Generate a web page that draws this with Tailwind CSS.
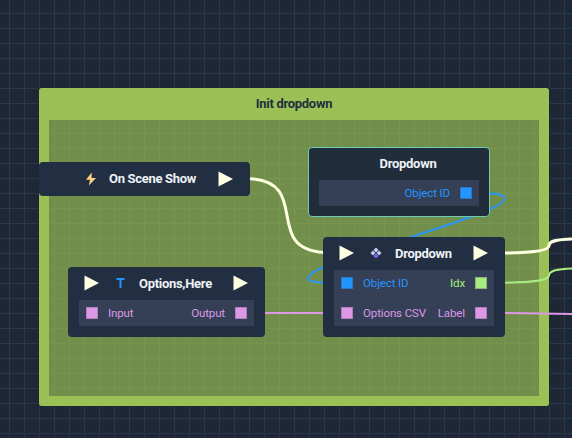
<!DOCTYPE html>
<html lang="en">
<head>
<meta charset="utf-8">
<title>Node graph</title>
<script src="https://cdn.jsdelivr.net/npm/@tailwindcss/browser@4"></script>
</head>
<body class="overflow-hidden bg-[#1e2735]">
<svg class="hidden">
  <symbol id="flow" viewBox="0 0 15 16"><path d="M.5.5 15 8 .5 15.5Z" fill="#ffffe1"/></symbol>
</svg>
<main class="relative h-[438px] w-[572px] overflow-hidden bg-[#1e2735] bg-[linear-gradient(to_right,#2c3847_1px,transparent_1px),linear-gradient(to_bottom,#2c3847_1px,transparent_1px)] bg-[size:15px_15px] bg-[position:9px_13px] font-['Roboto',sans-serif] text-[11.5px] leading-[16px] tracking-[-0.12px]">
  <!-- group -->
  <section class="absolute left-[39px] top-[88px] flex h-[318px] w-[510px] flex-col rounded-[2px] border-x-10 border-b-10 border-[#9bc056] outline outline-[#1e2735]">
    <h2 class="h-8 bg-[#9bc056] pt-2 text-center text-[13px] font-bold tracking-[-0.3px] text-[#222f3e]">Init dropdown</h2>
    <div class="flex-1 bg-[#9bc056]/68"></div>
  </section>

  <!-- links -->
  <svg class="absolute inset-0" width="572" height="438" fill="none">
    <path d="M250 178.700C312 182 262 249 324 252.400" stroke="#ffffe1" stroke-width="3"/>
    <path d="M505 253C535 252.500 548 250.500 549 246C549 241 556 239.500 572 239" stroke="#ffffe1" stroke-width="3"/>
    <path d="M505 282.700C535 282.300 548 280.500 549 275.500C549 271 556 269 572 268.500" stroke="#a8ec81" stroke-width="2"/>
    <path d="M265 313H324M505 313C540 313 540 314 572 314" stroke="#dc98e5" stroke-width="2"/>
    <path d="M489 193.500C507 193.500 512 200 490 209C469 218.500 439 228 411 237C374 248 342 258 323 267C301 278 305 282 324 282.500" stroke="#2b96f5" stroke-width="2"/>
  </svg>

  <!-- event node -->
  <article class="absolute left-[39px] top-[162px] flex h-[34px] w-[211px] items-center rounded-[4px] bg-[#222f42]">
    <svg class="ml-[46px] h-[14px] w-[12px]" viewBox="0 0 12 14"><path d="M6.700.5 1 7.800H5L3.900 13.500 11 6H6.600Z" fill="#ffcf7d"/></svg>
    <h3 class="ml-3 w-[97px] text-[13px] font-bold tracking-[-0.3px] text-[#eef1f5]">On Scene Show</h3>
    <svg class="ml-[12px] h-4 w-[15px]"><use href="#flow"/></svg>
  </article>

  <!-- text node -->
  <article class="absolute left-[68px] top-[267px] h-[70px] w-[197px] rounded-[4px] bg-[#222f42] px-[11px]">
    <header class="mb-px flex h-8 items-center pl-[5px]">
      <svg class="h-4 w-[15px]"><use href="#flow"/></svg>
      <svg class="ml-[17px] h-[10px] w-[9px]" viewBox="0 0 9 10"><path d="M.5 1H8.500M4.500 1V10" stroke="#2395ff" stroke-width="2"/></svg>
      <h3 class="ml-[14px] w-[94px] pt-px text-[13px] font-bold tracking-[-0.3px] text-[#eef1f5]">Options,Here</h3>
      <svg class="h-4 w-[15px] shrink-0"><use href="#flow"/></svg>
    </header>
    <div class="flex h-[26px] items-center bg-[#354056] px-[7px] text-[#dc98e5]">
      <i class="size-3 border border-[#ac80b8] bg-[#dc98e5]"></i><span class="ml-[10px]">Input</span>
      <span class="ml-auto mr-[10px]">Output</span><i class="size-3 border border-[#ac80b8] bg-[#dc98e5]"></i>
    </div>
  </article>

  <!-- selected object node -->
  <article class="absolute left-[308px] top-[147px] h-[70px] w-[182px] rounded-[4px] border border-[#6dccb0] bg-[#222d3c] px-[10px]">
    <h3 class="h-8 pt-2 pl-[18px] text-center text-[13px] font-bold tracking-[-0.3px] text-[#eef1f5]">Dropdown</h3>
    <div class="flex h-[26px] items-center justify-end bg-[#354056] px-[7px] text-[#2395ff]">
      <span class="mr-[10px]">Object ID</span><i class="size-3 border border-[#2b76c0] bg-[#2395ff]"></i>
    </div>
  </article>

  <!-- dropdown node -->
  <article class="absolute left-[323px] top-[237px] h-[100px] w-[182px] rounded-[4px] bg-[#222f42] px-[11px]">
    <header class="mb-px flex h-8 items-center pl-[5px]">
      <svg class="h-4 w-[15px]"><use href="#flow"/></svg>
      <svg class="ml-[17px] h-[10px] w-[10px] overflow-visible" viewBox="0 0 10 10" fill="#bdcdea"><path d="M5-.5 7.500 2 5 4.500 2.500 2ZM2 2.500 4.500 5 2 7.500-.5 5ZM8 2.500 10.500 5 8 7.500 5.500 5Z"/><path d="M5 5.500 7.500 8 5 10.500 2.500 8Z" fill="#8a63f4"/></svg>
      <h3 class="ml-[14px] w-[78px] pt-px text-[13px] font-bold tracking-[-0.3px] text-[#eef1f5]">Dropdown</h3>
      <svg class="h-4 w-[15px] shrink-0"><use href="#flow"/></svg>
    </header>
    <div class="flex h-[56px] flex-col justify-between bg-[#354056] px-[7px] py-[5px]">
      <div class="flex items-center text-[#2395ff]">
        <i class="size-3 border border-[#2b76c0] bg-[#2395ff]"></i><span class="ml-[10px]">Object ID</span>
        <span class="ml-auto mr-[10px] text-[#a8ec81]">Idx</span><i class="size-3 border border-[#86b873] bg-[#a8ec81]"></i>
      </div>
      <div class="flex items-center text-[#dc98e5]">
        <i class="size-3 border border-[#ac80b8] bg-[#dc98e5]"></i><span class="ml-[10px]">Options CSV</span>
        <span class="ml-auto mr-[10px]">Label</span><i class="size-3 border border-[#ac80b8] bg-[#dc98e5]"></i>
      </div>
    </div>
  </article>
</main>
</body>
</html>
